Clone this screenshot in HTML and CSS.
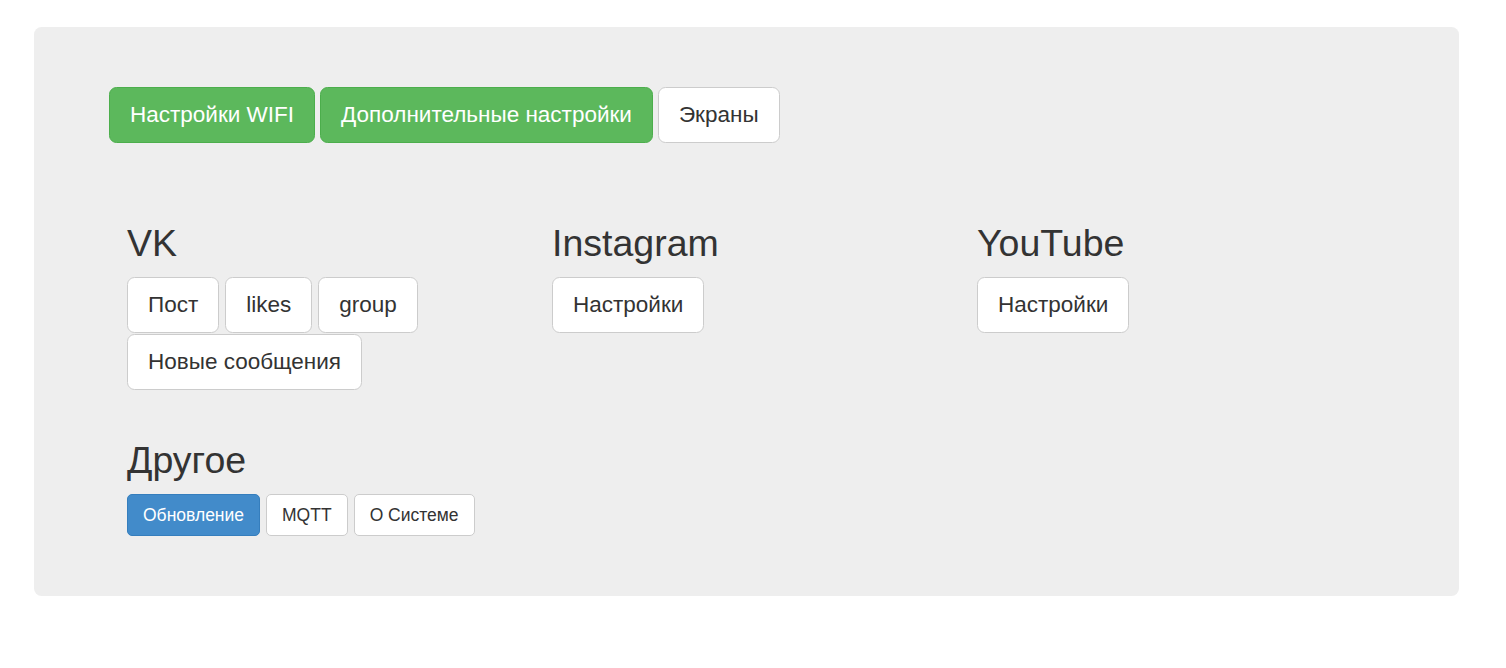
FILE: index.html
```html
<!DOCTYPE html>
<html lang="ru">
<head>
<meta charset="utf-8">
<title>Настройки</title>
<link rel="stylesheet" href="styles.css">
</head>
<body>
<div class="jumbotron">
  <div class="nav-buttons">
    <button class="btn btn-lg btn-success">Настройки WIFI</button>
    <button class="btn btn-lg btn-success">Дополнительные настройки</button>
    <button class="btn btn-lg btn-default">Экраны</button>
  </div>
  <div class="grid">
    <div class="col">
      <h2>VK</h2>
      <div class="btn-group">
        <button class="btn btn-lg btn-default">Пост</button>
        <button class="btn btn-lg btn-default">likes</button>
        <button class="btn btn-lg btn-default">group</button>
        <button class="btn btn-lg btn-default">Новые сообщения</button>
      </div>
    </div>
    <div class="col">
      <h2>Instagram</h2>
      <div class="btn-group">
        <button class="btn btn-lg btn-default">Настройки</button>
      </div>
    </div>
    <div class="col">
      <h2>YouTube</h2>
      <div class="btn-group">
        <button class="btn btn-lg btn-default">Настройки</button>
      </div>
    </div>
  </div>
  <div class="grid other">
    <div class="col">
      <h2>Другое</h2>
      <div class="btn-group">
        <button class="btn btn-primary">Обновление</button>
        <button class="btn btn-default">MQTT</button>
        <button class="btn btn-default">О Системе</button>
      </div>
    </div>
  </div>
</div>
</body>
</html>
```

FILE: styles.css
```css
html, body {
  margin: 0;
  padding: 0;
  background: #fff;
}

body {
  font-family: "Liberation Sans", Arial, Helvetica, sans-serif;
  color: #333;
}

.jumbotron {
  margin: 27px 47px 0 34px;
  padding: 60px 75px;
  background: #eee;
  border-radius: 7.5px;
  box-sizing: border-box;
  height: 569px;
}

.nav-buttons {
  display: flex;
  gap: 5px;
}

.grid {
  display: grid;
  grid-template-columns: repeat(3, 1fr);
  margin-top: 80px;
}

.grid.other {
  margin-top: 50px;
}

.col {
  padding: 0 18px;
}

h2 {
  font-size: 37.5px;
  font-weight: 500;
  line-height: 1.1;
  margin: 0 0 12.75px;
}

.btn-group {
  display: flex;
  flex-wrap: wrap;
  column-gap: 6px;
  row-gap: 1px;
}

.btn {
  font-family: inherit;
  display: inline-block;
  font-size: 17.5px;
  line-height: 25px;
  padding: 7.5px 15px;
  border: 1px solid #ccc;
  border-radius: 5px;
  background: #fff;
  color: #333;
  cursor: pointer;
  margin: 0;
}

.btn-lg {
  font-size: 22.5px;
  line-height: 30px;
  padding: 12px 20px;
  border-radius: 7.5px;
}

.btn-success {
  background: #5cb85c;
  border-color: #4cae4c;
  color: #fff;
}

.btn-primary {
  background: #428bca;
  border-color: #357ebd;
  color: #fff;
}
```
